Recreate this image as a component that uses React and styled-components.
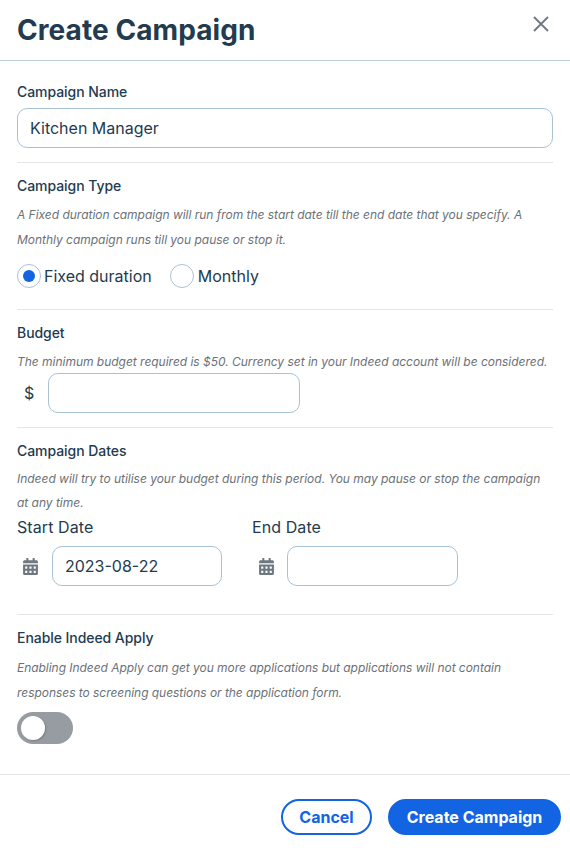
import React from "react";
import styled, { createGlobalStyle } from "styled-components";
import { FaCalendarAlt } from "react-icons/fa";

const Global = createGlobalStyle`
  html, body { margin: 0; padding: 0; background: #fff; }
  body { font-family: Inter, "Liberation Sans", sans-serif; color: #233b53; }
  * { box-sizing: border-box; }
`;
const Modal = styled.div`
  width: 570px; height: 848px; background: #fff; display: flex; flex-direction: column; overflow: hidden;
`;
const Header = styled.header`
  height: 61px; flex: none; display: flex; justify-content: space-between; align-items: flex-start;
  padding: 0 17px; border-bottom: 1px solid #bed0de;
`;
const Title = styled.h1`
  margin: 10px 0 0; font-size: 28px; line-height: 40px; font-weight: 700; color: #233b4f; letter-spacing: 0.07px;
`;
const Close = styled.button`
  border: 0; background: none; padding: 0; width: 18px; height: 18px; margin: 15px 3px 0 0; color: #6f7882; display: flex;
`;
const Body = styled.div`
  flex: 1; padding: 0 17px;
`;
const Section = styled.section`
  padding-top: ${p => p.$top ?? 13}px;
  height: ${p => p.$height}px;
  border-bottom: ${p => (p.$plain ? "none" : "1px solid #e3e6e8")};
`;
const Label = styled.div`
  font-size: 14px; line-height: 20px; font-weight: 500; color: #233b4f; letter-spacing: -0.06px;
  margin-bottom: ${p => p.$gap ?? 0}px;
`;
const Hint = styled.p`
  margin: ${p => p.$top ?? 6}px 0 0; font-size: 12px; line-height: ${p => p.$lh ?? 25}px; font-style: italic; color: #6b7178; white-space: nowrap; letter-spacing: ${p => p.$ls ?? -0.02}px;
`;
const Input = styled.input`
  display: block; height: 40px; width: ${p => p.$w}px; border: 1px solid #a9c1d6; border-radius: 10px;
  padding: 0 12px; font: 400 16px/24px Inter, sans-serif; color: #233b4f; background: #fff; outline: none;
`;
const RadioRow = styled.div`
  display: flex; align-items: center; margin-top: 12px; height: 24px;
`;
const RadioOption = styled.label`
  display: flex; align-items: center; gap: ${p => p.$gap}px; margin-right: 18px; font-size: 16px; line-height: 24px; color: #233b4f;
`;
const RadioCircle = styled.span`
  width: 24px; height: 24px; border-radius: 50%; border: 1px solid #a9c1d6; display: flex; align-items: center; justify-content: center;
  &::after { content: ""; width: 12px; height: 12px; border-radius: 50%; background: ${p => (p.$on ? "#1264e3" : "transparent")}; }
`;
const AmountRow = styled.div`
  display: flex; align-items: center; margin-top: -1px;
`;
const Currency = styled.span`
  width: 31px; padding-left: 7px; font-size: 16px; color: #233b4f;
`;
const Dates = styled.div`
  display: flex;
`;
const DateField = styled.div`
  width: ${p => p.$w}px; flex: none;
`;
const DateLabel = styled.div`
  font-size: 16px; line-height: 24px; font-weight: 400; color: #233b4f; margin-bottom: 7px; letter-spacing: 0.08px;
`;
const DateRow = styled.div`
  display: flex; align-items: center;
`;
const CalSlot = styled.span`
  width: 35px; padding-left: ${p => p.$pad}px; flex: none; display: flex; color: #6f7882;
`;
const Toggle = styled.div`
  width: 56px; height: 32px; border-radius: 16px; background: #979ca3; margin-top: 7px; padding: 4px;
  &::after { content: ""; display: block; width: 24px; height: 24px; border-radius: 50%; background: #fff; box-shadow: 1px 1px 2px rgba(0,0,0,.2); }
`;
const Footer = styled.footer`
  height: 74px; flex: none; border-top: 1px solid #e3e6e8; display: flex; justify-content: flex-end; align-items: flex-start;
  padding: 24px 9px 0 0; gap: 16px;
`;
const Button = styled.button`
  height: 36px; border-radius: 18px; font: 700 16px/20px Inter, sans-serif; padding: 0;
  width: ${p => p.$w}px;
  border: 2px solid #1264e3;
  background: ${p => (p.$primary ? "#1264e3" : "#fff")};
  color: ${p => (p.$primary ? "#fff" : "#1264e3")};
`;

export default function App() {
  return (
    <Modal>
      <Global />
      <Header>
        <Title>Create Campaign</Title>
        <Close aria-label="Close">
          <svg width="18" height="18" viewBox="0 0 18 18" fill="none" stroke="currentColor" strokeWidth="1.8">
            <path d="M2 2 L16 16 M16 2 L2 16" />
          </svg>
        </Close>
      </Header>
      <Body>
        <Section $top={21} $height={102}>
          <Label $gap={6}>Campaign Name</Label>
          <Input $w={536} defaultValue="Kitchen Manager" />
        </Section>
        <Section $height={147}>
          <Label>Campaign Type</Label>
          <Hint>A Fixed duration campaign will run from the start date till the end date that you specify. A<br />Monthly campaign runs till you pause or stop it.</Hint>
          <RadioRow>
            <RadioOption $gap={3}><RadioCircle $on />Fixed duration</RadioOption>
            <RadioOption $gap={4}><RadioCircle />Monthly</RadioOption>
          </RadioRow>
        </Section>
        <Section $height={118}>
          <Label>Budget</Label>
          <Hint>The minimum budget required is $50. Currency set in your Indeed account will be considered.</Hint>
          <AmountRow>
            <Currency>$</Currency>
            <Input $w={252} />
          </AmountRow>
        </Section>
        <Section $height={187}>
          <Label>Campaign Dates</Label>
          <Hint $lh={24}>Indeed will try to utilise your budget during this period. You may pause or stop the campaign<br />at any time.</Hint>
          <Dates>
            <DateField $w={235}>
              <DateLabel>Start Date</DateLabel>
              <DateRow>
                <CalSlot $pad={5}><FaCalendarAlt size={17} /></CalSlot>
                <Input $w={170} defaultValue="2023-08-22" />
              </DateRow>
            </DateField>
            <DateField $w={206}>
              <DateLabel>End Date</DateLabel>
              <DateRow>
                <CalSlot $pad={6}><FaCalendarAlt size={17} /></CalSlot>
                <Input $w={171} />
              </DateRow>
            </DateField>
          </Dates>
        </Section>
        <Section $plain>
          <Label>Enable Indeed Apply</Label>
          <Hint $top={7} $ls={-0.04}>Enabling Indeed Apply can get you more applications but applications will not contain<br />responses to screening questions or the application form.</Hint>
          <Toggle />
        </Section>
      </Body>
      <Footer>
        <Button $w={91}>Cancel</Button>
        <Button $w={173} $primary>Create Campaign</Button>
      </Footer>
    </Modal>
  );
}
